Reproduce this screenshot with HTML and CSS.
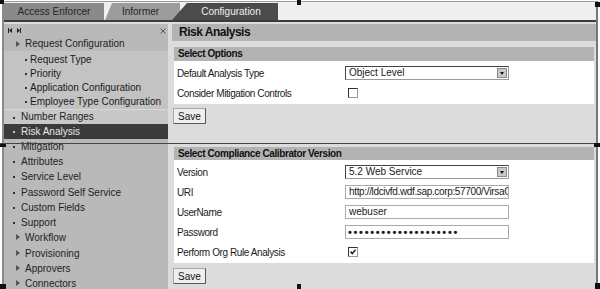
FILE: index.html
```html
<!DOCTYPE html>
<html lang="en">
<head>
  <meta charset="UTF-8">
  <title>Configuration - Risk Analysis</title>
  <link rel="stylesheet" href="styles.css">
</head>
<body>
  <div class="sheet">
    <div class="frame">
      <!-- Top tabs -->
      <div class="tabs">
        <div class="tab tab-first">Access Enforcer</div>
        <div class="tab tab-mid">Informer</div>
        <div class="tab tab-active">Configuration</div>
      </div>

      <div class="main">
        <!-- Left navigation -->
        <aside class="nav">
          <div class="nav-head">
            <svg class="nav-arrows" width="14" height="5" viewBox="0 0 14 5">
              <rect x="0" y="0" width="1" height="5" fill="#222"/>
              <polygon points="4,0 1,2.5 4,5" fill="#222"/>
              <polygon points="9,0 12,2.5 9,5" fill="#222"/>
              <rect x="12" y="0" width="1" height="5" fill="#222"/>
            </svg>
            <svg class="nav-close" width="6" height="6" viewBox="0 0 6 6">
              <path d="M0.5 0.5 L5.5 5.5 M5.5 0.5 L0.5 5.5" stroke="#555" stroke-width="1"/>
            </svg>
          </div>
          <div class="nav-item nav-folder nav-top">Request Configuration</div>
          <ul class="nav-sub">
            <li>Request Type</li>
            <li>Priority</li>
            <li>Application Configuration</li>
            <li>Employee Type Configuration</li>
          </ul>
          <div class="nav-item nav-light">Number Ranges</div>
          <div class="nav-item nav-selected">Risk Analysis</div>
          <div class="nav-item">Mitigation</div>
          <div class="nav-item nav-low">Attributes</div>
          <div class="nav-item nav-low">Service Level</div>
          <div class="nav-item nav-low">Password Self Service</div>
          <div class="nav-item nav-low">Custom Fields</div>
          <div class="nav-item nav-low">Support</div>
          <div class="nav-item nav-low nav-folder">Workflow</div>
          <div class="nav-item nav-low nav-folder">Provisioning</div>
          <div class="nav-item nav-low nav-folder">Approvers</div>
          <div class="nav-item nav-low nav-folder">Connectors</div>
        </aside>

        <!-- Main content -->
        <div class="content">
          <h1 class="page-title">Risk Analysis</h1>

          <section class="section first">
            <h2 class="section-head">Select Options</h2>
            <div class="section-body">
              <div class="row">
                <span class="label">Default Analysis Type</span>
                <div class="select">Object Level<span class="select-btn"></span></div>
              </div>
              <div class="row">
                <span class="label">Consider Mitigation Controls</span>
                <span class="check"></span>
              </div>
            </div>
          </section>
          <div class="actions"><button class="btn">Save</button></div>

          <section class="section">
            <h2 class="section-head short">Select Compliance Calibrator Version</h2>
            <div class="section-body">
              <div class="row">
                <span class="label">Version</span>
                <div class="select">5.2 Web Service<span class="select-btn"></span></div>
              </div>
              <div class="row">
                <span class="label">URI</span>
                <div class="field tight">http://ldcivfd.wdf.sap.corp:57700/VirsaCC</div>
              </div>
              <div class="row">
                <span class="label">UserName</span>
                <div class="field">webuser</div>
              </div>
              <div class="row">
                <span class="label">Password</span>
                <div class="field dots">••••••••••••••••••••</div>
              </div>
              <div class="row">
                <span class="label">Perform Org Rule Analysis</span>
                <span class="check">
                  <svg width="6" height="6" viewBox="0 0 6 6"><path d="M0.5 2.5 L2.3 4.6 L5.6 0.6" stroke="#111" stroke-width="1.4" fill="none"/></svg>
                </span>
              </div>
            </div>
          </section>
          <div class="actions"><button class="btn">Save</button></div>
        </div>
      </div>
    </div>

    <!-- seam between the two captures and the selection handles -->
    <div class="cut"></div>
    <span class="handle h-tl"></span>
    <span class="handle h-tm"></span>
    <span class="handle h-tr"></span>
    <span class="handle h-ml"></span>
    <span class="handle h-mr"></span>
    <span class="handle h-bl"></span>
    <span class="handle h-bm"></span>
    <span class="handle h-br"></span>
  </div>
</body>
</html>
```

FILE: styles.css
```css
/* Grey SAP-style configuration screen */
body {
  margin: 0;
  font-family: "Liberation Sans", Arial, sans-serif;
  font-size: 10px;
  color: #1a1a1a;
  background: #fff;
  overflow: hidden;
}

.sheet {
  position: relative;
  width: 600px;
  height: 289px;
  overflow: hidden;
}

.frame {
  margin: 1px 0 0 2px;
  width: 596px;
  height: 288px;
  box-sizing: border-box;
  border-top: 1px solid #9a9a9a;
  border-left: 2px solid #8a8a8a;
  border-right: 2px solid #777;
  overflow: hidden;
  background: #dcdcdc;
}

/* Tabs */
.tabs {
  display: flex;
  height: 18px;
  background: #efefef;
  border-bottom: 2px solid #3c3c3c;
}

.tab {
  height: 17px;
  margin-top: 1px;
  line-height: 17px;
  box-sizing: border-box;
  text-align: center;
  white-space: nowrap;
}

.tab-first {
  width: 100px;
  background: #8a8a8a;
  color: #262626;
}

.tab-mid {
  width: 75px;
  margin-left: 1px;
  padding-right: 4px;
  background: #9c9c9c;
  color: #262626;
  clip-path: polygon(7px 0, 100% 0, 100% 100%, 0 100%);
}

.tab-active {
  width: 106px;
  margin-left: -8px;
  padding-left: 12px;
  background: #4b4b4b;
  color: #f0f0f0;
  clip-path: polygon(15px 0, 100% 0, 100% 100%, 0 100%);
}

/* Layout */
.main {
  display: flex;
  gap: 4px;
  padding-top: 2px;
}

.nav {
  width: 164px;
  flex-shrink: 0;
  background: #b9b9b9;
}

.content {
  width: 424px;
}

/* Navigation */
.nav-head {
  height: 13px;
  display: flex;
  justify-content: space-between;
  align-items: center;
  padding: 0 2px 0 4px;
}

.nav-item {
  position: relative;
  height: 15px;
  line-height: 15px;
  padding-left: 17px;
  color: #1e1e1e;
  white-space: nowrap;
}

.nav-item::before {
  content: "";
  position: absolute;
  left: 9px;
  top: 7px;
  width: 2px;
  height: 2px;
  background: #333;
}

.nav-low {
  height: 15.3px;
  line-height: 15.3px;
}

.nav-top {
  height: 14px;
  line-height: 14px;
}

.nav-folder {
  padding-left: 21px;
}

.nav-folder::before {
  left: 12px;
  top: 4px;
  width: 0;
  height: 0;
  background: none;
  border-left: 4px solid #555;
  border-top: 3px solid transparent;
  border-bottom: 3px solid transparent;
}

.nav-top::before {
  top: 4px;
}

.nav-sub {
  list-style: none;
  margin: 0;
  padding: 2px 0 0;
  background: #c3c3c3;
}

.nav-sub li {
  position: relative;
  height: 14px;
  line-height: 14px;
  padding-left: 26px;
  white-space: nowrap;
}

.nav-sub li::before {
  content: "";
  position: absolute;
  left: 21px;
  top: 6px;
  width: 2px;
  height: 2px;
  background: #333;
}

.nav-light {
  background: #c8c8c8;
  border-top: 1px solid #d6d6d6;
  height: 14px;
  line-height: 14px;
}

.nav-selected {
  background: #3b3b3b;
  color: #e8e8e8;
}

.nav-selected::before {
  background: #ccc;
}

/* Content */
.page-title {
  margin: 0;
  height: 17px;
  line-height: 17px;
  padding-left: 7px;
  background: #b3b3b3;
  font-size: 12px;
  letter-spacing: -0.5px;
  color: #111;
}

.section {
  margin: 0 2px 0 2px;
}

.section.first {
  margin-top: 6px;
}

.section-head {
  margin: 0;
  height: 14px;
  line-height: 14px;
  padding-left: 4px;
  background: #b3b3b3;
  font-size: 10px;
  letter-spacing: -0.4px;
  color: #111;
}

.section-head.short {
  height: 13px;
  line-height: 13px;
}

.section-body {
  background: #fff;
  padding: 2px 0 1px 3px;
}

.row {
  display: grid;
  grid-template-columns: 168px 1fr;
  align-items: center;
  height: 20px;
}

.label {
  letter-spacing: -0.4px;
  white-space: nowrap;
}

.select {
  position: relative;
  width: 164px;
  height: 14px;
  box-sizing: border-box;
  border: 1px solid #9a9a9a;
  border-top-color: #444;
  border-left-color: #444;
  padding-left: 3px;
  line-height: 12px;
  background: #fff;
  white-space: nowrap;
}

.select-btn {
  position: absolute;
  right: 1px;
  top: 1px;
  width: 10px;
  height: 10px;
  box-sizing: border-box;
  background: #c9c9c9;
  border: 1px solid #8a8a8a;
}

.select-btn::after {
  content: "";
  position: absolute;
  left: 2px;
  top: 3px;
  border-top: 3px solid #111;
  border-left: 2px solid transparent;
  border-right: 2px solid transparent;
}

.field {
  width: 164px;
  height: 14px;
  box-sizing: border-box;
  border: 1px solid #aaa;
  padding-left: 3px;
  line-height: 12px;
  overflow: hidden;
  white-space: nowrap;
  background: #fff;
}

.field.tight {
  letter-spacing: -0.35px;
}

.dots {
  font-size: 11px;
  font-weight: bold;
  letter-spacing: 1.7px;
  padding-left: 2px;
}

.check {
  display: flex;
  align-items: center;
  justify-content: center;
  width: 8px;
  height: 8px;
  margin-left: 3px;
  border: 1px solid #333;
  border-right-color: #999;
  border-bottom-color: #999;
  background: #fff;
}

.actions {
  padding: 4px 0 23px 1px;
}

.actions + .section {
  margin-top: 0;
}

.section + .actions:last-child {
  padding-top: 5px;
}

.btn {
  display: block;
  width: 33px;
  height: 16px;
  padding: 0;
  font-family: inherit;
  font-size: 10px;
  color: #111;
  background: #efefef;
  border: 1px solid #5a5a5a;
  border-top-color: #a8a8a8;
  border-left-color: #a8a8a8;
}

/* Overlays: seam line and selection handles */
.cut {
  position: absolute;
  left: 0;
  top: 143px;
  width: 600px;
  height: 1px;
  background: #444;
}

.handle {
  position: absolute;
  background: #111;
}

.h-tl { left: 0; top: 0; width: 4px; height: 4px; }
.h-tm { left: 297px; top: 0; width: 4px; height: 5px; }
.h-tr { left: 595px; top: 2px; width: 5px; height: 5px; }
.h-ml { left: 0; top: 144px; width: 6px; height: 3px; }
.h-mr { left: 594px; top: 143px; width: 6px; height: 4px; }
.h-bl { left: 0; top: 284px; width: 6px; height: 5px; }
.h-bm { left: 297px; top: 284px; width: 4px; height: 5px; }
.h-br { left: 595px; top: 283px; width: 5px; height: 6px; }
```
